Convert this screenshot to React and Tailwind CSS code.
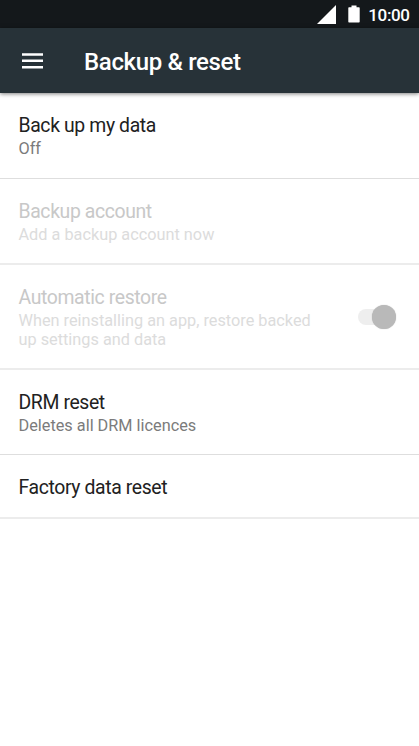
const items = [
  { title: 'Back up my data', summary: 'Off', size: 'h-[86px] border-b border-[#dedede]' },
  {
    title: 'Backup account',
    summary: 'Add a backup account now',
    size: 'h-[86px] border-b-2 border-[#ececec]',
    disabled: true,
  },
  {
    title: 'Automatic restore',
    summary: 'When reinstalling an app, restore backed up settings and data',
    size: 'h-[105px] border-b-2 border-[#ececec]',
    disabled: true,
    toggle: true,
  },
  { title: 'DRM reset', summary: 'Deletes all DRM licences', size: 'h-[85px] border-b border-[#dedede]' },
  { title: 'Factory data reset', size: 'h-16 border-b-2 border-[#ececec]' },
];

const StatusBar = () => (
  <div className="flex h-7 items-center justify-end bg-[#14181b] pr-[9.5px] text-white">
    <svg className="mr-3 h-[19px] w-[19px]" viewBox="0 0 19 19" fill="currentColor">
      <path d="M19 0v19H0z" />
    </svg>
    <svg className="mr-2 h-[18px] w-3" viewBox="0 0 12 18" fill="currentColor">
      <path d="M3.5 0.5h5v1.7H11a.7.7 0 0 1 .7.7v13.9a.7.7 0 0 1-.7.7H1a.7.7 0 0 1-.7-.7V2.9a.7.7 0 0 1 .7-.7h2.5z" />
    </svg>
    <span className="pt-0.5 text-[17px] leading-[26px] font-medium tracking-[-0.4px]">10:00</span>
  </div>
);

const Toggle = () => (
  <div className="flex h-6 w-[38px] items-center">
    <div className="h-4 w-[34px] shrink-0 rounded-full bg-[#eeeeee]" />
    <div className="z-10 -ml-5 h-6 w-6 shrink-0 rounded-full bg-[#b9b9b9] shadow-[0_0_1px_rgba(0,0,0,0.3)]" />
  </div>
);

const SettingRow = ({ item }) => (
  <div
    className={`flex items-start justify-between pt-[21px] pr-[22.6px] pl-[18.5px] ${item.size} ${
      item.disabled ? 'text-[#c8c8c8]' : 'text-[#212121]'
    }`}
  >
    <div className="w-[305px]">
      <h2 className="text-[19.4px] leading-6 tracking-[-0.38px]">{item.title}</h2>
      {item.summary && (
        <p
          className={`pt-px text-[16.3px] leading-[19px] ${
            item.disabled ? 'text-[#dcdcdc]' : 'text-[#7b7b7b]'
          }`}
        >
          {item.summary}
        </p>
      )}
    </div>
    {item.toggle && (
      <div className="pt-[19px]">
        <Toggle />
      </div>
    )}
  </div>
);

export default function App() {
  return (
    <div className="h-[746px] w-[419px] overflow-hidden bg-white font-[Roboto,sans-serif]">
      <StatusBar />
      <header className="relative flex h-[65px] items-center bg-[#273238] pl-[22px] text-white shadow-[0_1px_4px_rgba(0,0,0,0.5)]">
        <svg className="h-4 w-[21px]" viewBox="0 0 21 16" fill="currentColor">
          <path d="M0 .2h21v2.5H0zM0 6.6h21v2.5H0zM0 12.9h21v2.5H0z" />
        </svg>
        <h1 className="ml-[41px] pt-0.5 text-[24px] font-medium tracking-[-0.35px]">Backup &amp; reset</h1>
      </header>
      <main>
        {items.map((item) => (
          <SettingRow key={item.title} item={item} />
        ))}
      </main>
    </div>
  );
}
